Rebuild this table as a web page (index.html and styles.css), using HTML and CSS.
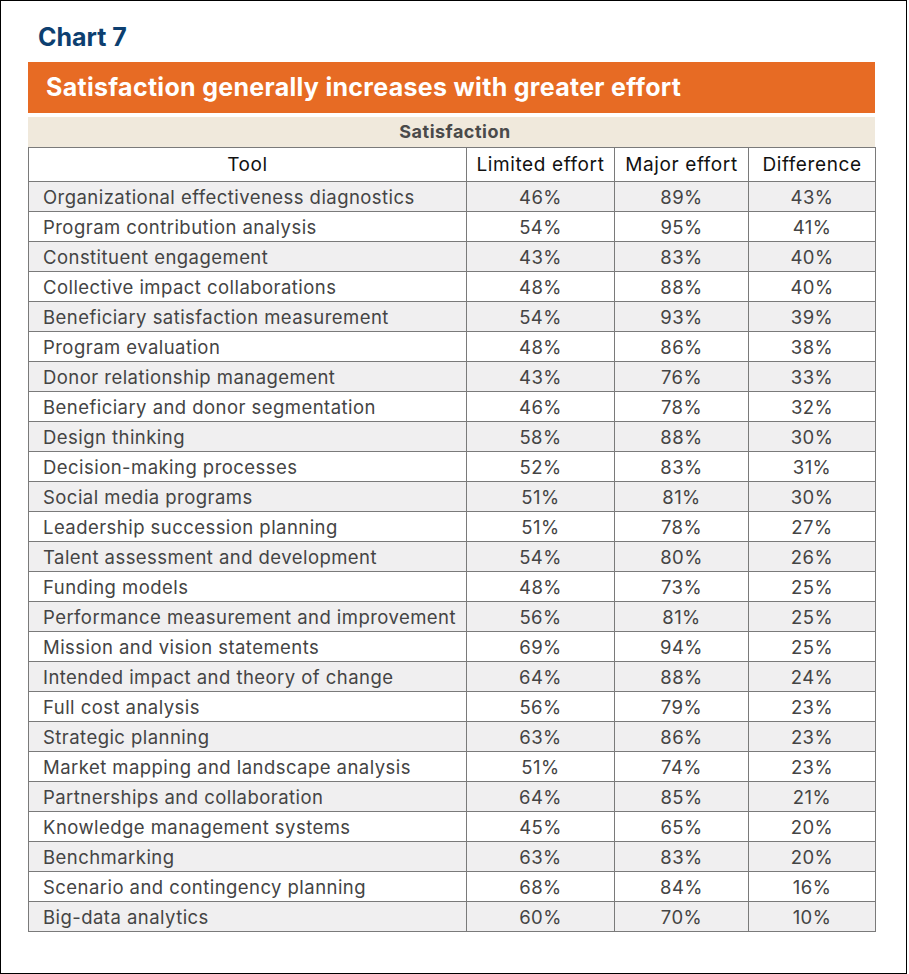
FILE: index.html
```html
<!DOCTYPE html>
<html>
<head>
<meta charset="utf-8">
<link rel="stylesheet" href="styles.css">
</head>
<body>
<div class="frame">
  <h1 class="chart-label">Chart 7</h1>
  <div class="banner">Satisfaction generally increases with greater effort</div>
  <div class="band">Satisfaction</div>
  <table class="data">
    <colgroup>
      <col class="c-tool"><col class="c-num1"><col class="c-num2"><col class="c-num3">
    </colgroup>
    <thead>
      <tr><th>Tool</th><th>Limited effort</th><th>Major effort</th><th>Difference</th></tr>
    </thead>
    <tbody>
      <tr><td>Organizational effectiveness diagnostics</td><td>46%</td><td>89%</td><td>43%</td></tr>
      <tr><td>Program contribution analysis</td><td>54%</td><td>95%</td><td>41%</td></tr>
      <tr><td>Constituent engagement</td><td>43%</td><td>83%</td><td>40%</td></tr>
      <tr><td>Collective impact collaborations</td><td>48%</td><td>88%</td><td>40%</td></tr>
      <tr><td>Beneficiary satisfaction measurement</td><td>54%</td><td>93%</td><td>39%</td></tr>
      <tr><td>Program evaluation</td><td>48%</td><td>86%</td><td>38%</td></tr>
      <tr><td>Donor relationship management</td><td>43%</td><td>76%</td><td>33%</td></tr>
      <tr><td>Beneficiary and donor segmentation</td><td>46%</td><td>78%</td><td>32%</td></tr>
      <tr><td>Design thinking</td><td>58%</td><td>88%</td><td>30%</td></tr>
      <tr><td>Decision-making processes</td><td>52%</td><td>83%</td><td>31%</td></tr>
      <tr><td>Social media programs</td><td>51%</td><td>81%</td><td>30%</td></tr>
      <tr><td>Leadership succession planning</td><td>51%</td><td>78%</td><td>27%</td></tr>
      <tr><td>Talent assessment and development</td><td>54%</td><td>80%</td><td>26%</td></tr>
      <tr><td>Funding models</td><td>48%</td><td>73%</td><td>25%</td></tr>
      <tr><td>Performance measurement and improvement</td><td>56%</td><td>81%</td><td>25%</td></tr>
      <tr><td>Mission and vision statements</td><td>69%</td><td>94%</td><td>25%</td></tr>
      <tr><td>Intended impact and theory of change</td><td>64%</td><td>88%</td><td>24%</td></tr>
      <tr><td>Full cost analysis</td><td>56%</td><td>79%</td><td>23%</td></tr>
      <tr><td>Strategic planning</td><td>63%</td><td>86%</td><td>23%</td></tr>
      <tr><td>Market mapping and landscape analysis</td><td>51%</td><td>74%</td><td>23%</td></tr>
      <tr><td>Partnerships and collaboration</td><td>64%</td><td>85%</td><td>21%</td></tr>
      <tr><td>Knowledge management systems</td><td>45%</td><td>65%</td><td>20%</td></tr>
      <tr><td>Benchmarking</td><td>63%</td><td>83%</td><td>20%</td></tr>
      <tr><td>Scenario and contingency planning</td><td>68%</td><td>84%</td><td>16%</td></tr>
      <tr><td>Big-data analytics</td><td>60%</td><td>70%</td><td>10%</td></tr>
    </tbody>
  </table>
</div>
</body>
</html>
```

FILE: styles.css
```css
* { box-sizing: border-box; }
html, body { margin: 0; padding: 0; background: #fff; }
body { font-family: Inter, "Liberation Sans", sans-serif; }

.frame {
  width: 907px;
  height: 974px;
  border: 1px solid #000;
  padding: 0 0 0 27px;
}

.chart-label {
  margin: 0;
  padding: 22px 0 0 10px;
  height: 61px;
  font-size: 25px;
  font-weight: 700;
  line-height: 28px;
  color: #0d3f70;
}

.banner {
  width: 847px;
  height: 51px;
  background: #e76b24;
  color: #fff;
  font-size: 25px;
  font-weight: 700;
  letter-spacing: 0.3px;
  line-height: 51px;
  padding-left: 18px;
}

.band {
  width: 847px;
  height: 30px;
  margin-top: 4px;
  background: #f0e9dc;
  color: #4a4a4a;
  font-size: 18px;
  font-weight: 700;
  letter-spacing: 0.5px;
  text-align: center;
  line-height: 30px;
  padding-left: 7px;
}

.data {
  width: 847px;
  border-collapse: collapse;
  table-layout: fixed;
  font-size: 18.5px;
  letter-spacing: 0.45px;
}
.c-tool { width: 438px; }
.c-num1 { width: 148px; }
.c-num2 { width: 134px; }
.c-num3 { width: 127px; }

.data th, .data td {
  border: 1px solid #7a7a7a;
  padding: 0;
}
.data th {
  height: 34px;
  font-size: 19px;
  letter-spacing: 0.6px;
  font-weight: 400;
  color: #111;
  text-align: center;
}
.data td {
  height: 30px;
  color: #444;
  text-align: center;
}
.data td:first-child {
  text-align: left;
  padding-left: 14px;
}
.data tbody tr:nth-child(odd) td { background: #f0eff0; }
```
